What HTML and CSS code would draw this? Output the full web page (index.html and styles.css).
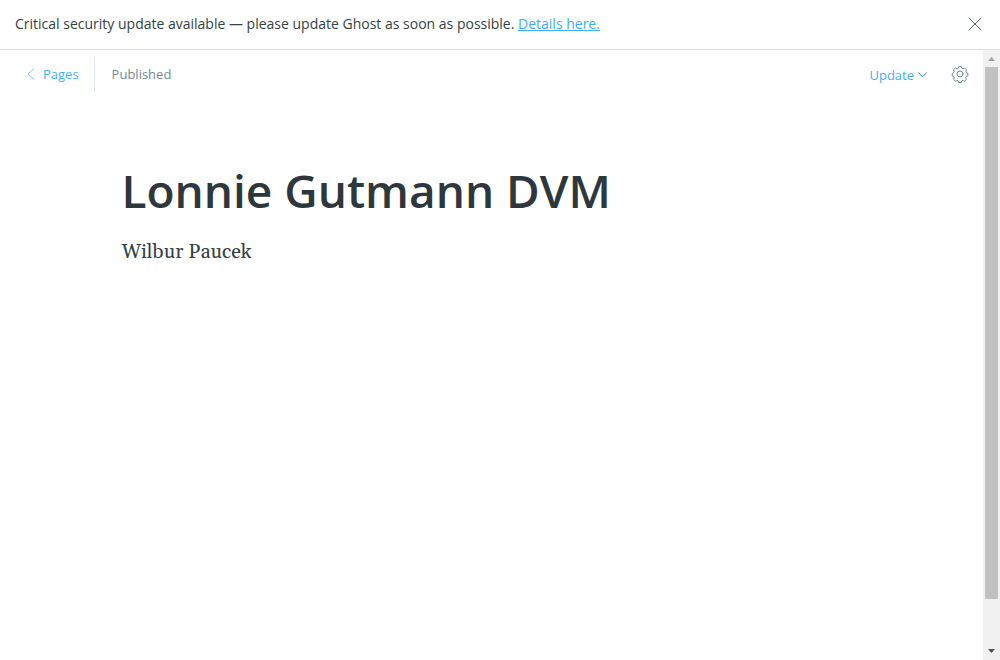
FILE: index.html
```html
<!DOCTYPE html>
<html lang="en">
<head>
<meta charset="utf-8">
<meta name="viewport" content="width=device-width, initial-scale=1">
<title>Lonnie Gutmann DVM</title>
<link rel="stylesheet" href="styles.css">
</head>
<body>
<div class="app">
  <aside class="alert">
    <p class="alert-text">Critical security update available — please update Ghost as soon as possible. <a class="alert-link" href="#details">Details here.</a></p>
    <button class="icon-button" type="button" aria-label="Close">
      <svg class="close-icon" viewBox="0 0 14 14" aria-hidden="true"><path d="M1 1l12 12M13 1L1 13"/></svg>
    </button>
  </aside>
  <div class="workspace">
    <main class="editor">
      <header class="toolbar">
        <a class="back" href="#pages">
          <svg class="back-icon" viewBox="0 0 8 12" aria-hidden="true"><path d="M7 .5L1 6l6 5.500"/></svg>
          Pages
        </a>
        <span class="status">Published</span>
        <button class="update" type="button">Update
          <svg class="update-icon" viewBox="0 0 9 6" aria-hidden="true"><path d="M.8.800L4.500 4.800 8.200.8"/></svg>
        </button>
        <button class="icon-button" type="button" aria-label="Settings">
          <svg class="gear-icon" viewBox="0 0 24 24" aria-hidden="true"><circle cx="12" cy="12" r="4.500"/><path d="M9.300 3.400L10.100 1h3.800l.8 2.400 1.900.8 2.300-1.100 2.900 2.900-1.200 2.200.8 2 2.400.8v3.800l-2.400.8-.8 2 1.200 2.300-2.900 2.800-2.300-1.100-1.900.8-.8 2.400h-3.800l-.8-2.400-1.900-.8-2.300 1.100-2.900-2.800 1.200-2.300-.8-2L.4 14.800V11l2.200-1 .8-2-1.200-2.200 2.900-2.800 2.300 1.200z"/></svg>
        </button>
      </header>
      <article class="content">
        <textarea class="title" rows="1" aria-label="Page title" spellcheck="false">Lonnie Gutmann DVM</textarea>
        <div class="body" contenteditable="true" role="textbox" aria-label="Page content" spellcheck="false"><p>Wilbur Paucek</p></div>
      </article>
    </main>
    <div class="scrollbar" aria-hidden="true">
      <svg class="arrow" viewBox="0 0 17 17"><path fill="#a3a3a3" d="M5 11l3.500-4 3.500 4z"/></svg>
      <div class="track"><div class="thumb"></div></div>
      <svg class="arrow" viewBox="0 0 17 17"><path fill="#505050" d="M5 6l3.500 4L12 6z"/></svg>
    </div>
  </div>
</div>
</body>
</html>
```
FILE: styles.css
```css
* {
  box-sizing: border-box;
}

body {
  margin: 0;
  background: #fff;
  color: #343f44;
  font: 13px/20px "Open Sans", "Noto Sans", sans-serif;
}

p {
  margin: 0;
}

svg {
  display: block;
  fill: none;
  stroke-linecap: round;
  stroke-linejoin: round;
}

button {
  padding: 0;
  border: 0;
  background: none;
  font: inherit;
  cursor: pointer;
}

.app {
  display: flex;
  flex-direction: column;
  min-height: 100vh;
}

.alert {
  display: flex;
  align-items: center;
  justify-content: space-between;
  padding: 14px 18px 15px 15px;
  border-bottom: 1px solid #dfe1e3;
  font-size: 14px;
}

.alert-link,
.back,
.update {
  color: #3eb0ef;
}

.icon-button {
  flex: none;
}

.close-icon {
  width: 14px;
  height: 14px;
  stroke: #54666d;
}

.workspace {
  display: flex;
  flex: 1;
}

.editor {
  flex: 1;
  min-width: 0;
}

.toolbar {
  display: flex;
  align-items: center;
  padding: 6px 15px 0 27px;
}

.back {
  display: flex;
  align-items: center;
  gap: 8px;
  padding: 8px 15px 8px 0;
  border-right: 1px solid #dfe8ef;
  text-decoration: none;
}

.back-icon {
  width: 8px;
  height: 12px;
  stroke: #7dcaf4;
}

.status {
  padding-left: 17px;
  color: #738a94;
}

.update {
  display: flex;
  align-items: center;
  gap: 4px;
  margin: 0 25px 0 auto;
  padding-top: 2px;
}

.update-icon {
  width: 9px;
  height: 6px;
  stroke: #3c8db8;
}

.gear-icon {
  width: 16px;
  height: 16px;
  overflow: visible;
  stroke: #738a94;
  stroke-width: 1.500;
}

.content {
  max-width: 740px;
  margin: 0 auto;
  padding-top: 64px;
}

.title {
  display: block;
  width: 100%;
  height: 68px;
  padding: 0;
  border: 0;
  outline: 0;
  background: none;
  color: #2e373c;
  font: 600 46px/68px "Open Sans", "Noto Sans", sans-serif;
  overflow: hidden;
  resize: none;
}

.body {
  padding-top: 12px;
  font: 20px/32px Gelasio, Georgia, "Liberation Serif", serif;
}

.scrollbar {
  display: flex;
  flex: none;
  flex-direction: column;
  width: 17px;
  background: #f1f1f1;
}

.arrow {
  width: 17px;
  height: 17px;
}

.track {
  flex: 1;
  padding: 0 2px;
}

.thumb {
  height: calc(92% + 2px);
  background: #c1c1c1;
}
```
